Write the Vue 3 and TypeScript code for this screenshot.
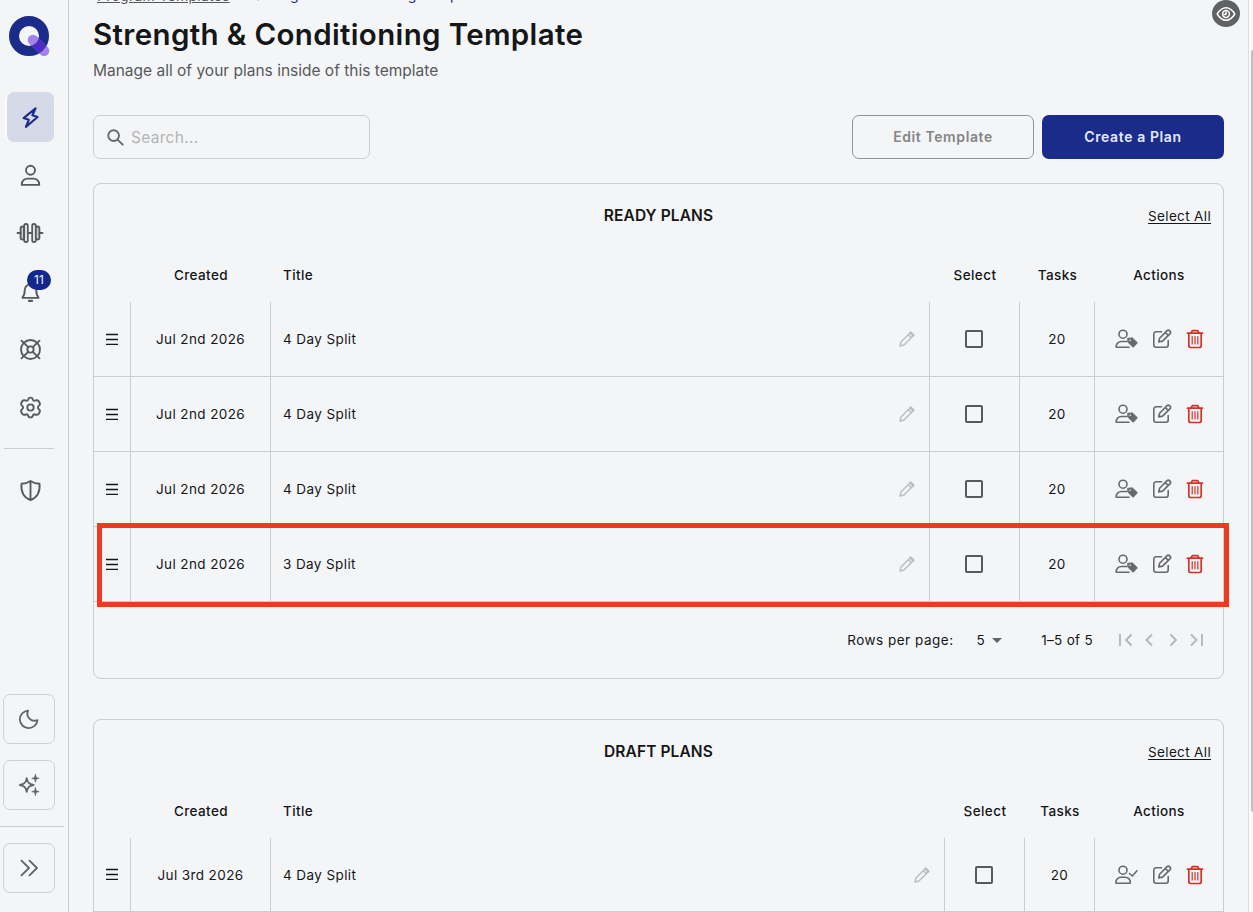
<script setup lang="ts">
interface Plan {
  id: number
  created: string
  title: string
  tasks: number
}
interface Panel {
  key: string
  heading: string
  assign: 'tag' | 'check'
  plans: Plan[]
  footer: boolean
}

const panels: Panel[] = [
  {
    key: 'ready',
    heading: 'READY PLANS',
    assign: 'tag',
    footer: true,
    plans: [
      { id: 1, created: 'Jul 2nd 2026', title: '4 Day Split', tasks: 20 },
      { id: 2, created: 'Jul 2nd 2026', title: '4 Day Split', tasks: 20 },
      { id: 3, created: 'Jul 2nd 2026', title: '4 Day Split', tasks: 20 },
      { id: 4, created: 'Jul 2nd 2026', title: '3 Day Split', tasks: 20 },
    ],
  },
  {
    key: 'draft',
    heading: 'DRAFT PLANS',
    assign: 'check',
    footer: false,
    plans: [{ id: 5, created: 'Jul 3rd 2026', title: '4 Day Split', tasks: 20 }],
  },
]
const highlighted = 4
</script>

<template>
  <div class="app">
    <aside class="sidebar">
      <svg class="logo" viewBox="0 0 42 42">
        <defs>
          <clipPath id="ring"><path clip-rule="evenodd" d="M20 0A20 20 0 0 1 20 40A20 20 0 0 1 20 0ZM20 10A10 10 0 0 0 20 30A10 10 0 0 0 20 10Z" /></clipPath>
        </defs>
        <circle cx="20" cy="20" r="15" fill="none" stroke="#1a2b8a" stroke-width="10" />
        <path d="M24 24L35 34.700" stroke="#a183ea" stroke-width="10.600" />
        <path d="M24 24L35 34.700" stroke="#4a2cc0" stroke-width="10.600" clip-path="url(#ring)" />
      </svg>

      <nav class="nav">
        <a class="nav-item active">
          <svg viewBox="0 0 24 24"><path d="M17.300 2.500L4.800 12.600L10.200 14.400L7.200 21.800L19.400 11.500L14 9.700Z" /></svg>
        </a>
        <a class="nav-item">
          <svg viewBox="0 0 24 24"><circle cx="12" cy="6.500" r="4.700" /><path d="M2.900 21.800V21A6 6 0 0 1 8.900 15.200H15.100A6 6 0 0 1 21.100 21V21.800Z" /></svg>
        </a>
        <a class="nav-item">
          <svg class="wide" viewBox="0 0 28 24">
            <rect class="shade" x="4.600" y="5.500" width="3.600" height="13" rx="1.800" /><rect x="8.200" y="3" width="3.600" height="18" rx="1.800" />
            <rect x="16.200" y="3" width="3.600" height="18" rx="1.800" /><rect class="shade" x="19.800" y="5.500" width="3.600" height="13" rx="1.800" />
            <path d="M11.800 12H16.200M1.500 12H4.600M23.400 12H26.500" />
          </svg>
        </a>
        <a class="nav-item">
          <svg viewBox="0 0 24 24"><path d="M3.500 18.600C5.500 16.500 6 14 6 10.500A6 6 0 0 1 18 10.500C18 14 18.500 16.500 20.500 18.600Z" /><path d="M10.400 21.800H13.600" stroke-width="2.200" /></svg>
          <span class="badge">11</span>
        </a>
        <a class="nav-item">
          <svg viewBox="0 0 24 24"><circle cx="12" cy="12" r="9.900" /><circle cx="12" cy="12" r="3.300" /><path d="M2.600 2.800L9.600 9.600M21.400 2.800L14.400 9.600M2.600 21.200L9.600 14.400M21.400 21.200L14.400 14.400" /></svg>
        </a>
        <a class="nav-item">
          <svg viewBox="0 0 24 24">
            <path d="M9.500 3.900Q9.800 1.700 12 1.700T14.500 3.900Q14.900 5 16.200 4.900Q19.200 3.700 20.500 5.300Q22.700 8.300 21.300 9.600Q19.700 10.800 19.700 12T21.300 14.400Q22.700 15.700 20.500 18.700Q19.200 20.300 16.200 19.100Q14.900 19 14.500 20.100Q14.200 22.300 12 22.300T9.500 20.100Q9.100 19 7.800 19.100Q4.800 20.300 3.500 18.700Q1.300 15.700 2.700 14.400Q4.300 13.200 4.300 12T2.700 9.600Q1.300 8.300 3.500 5.300Q4.800 3.700 7.800 4.900Q9.100 5 9.500 3.900Z" />
            <circle cx="12" cy="12" r="3.300" />
          </svg>
        </a>
      </nav>
      <div class="divider"></div>
      <a class="nav-item shield">
        <svg viewBox="0 0 24 24"><path d="M12 2C9 4 6 4.800 2.600 5C1.900 12.500 4.500 19 12 22C19.500 19 22.100 12.500 21.400 5C18 4.800 15 4 12 2ZM12 2V22" /></svg>
      </a>

      <div class="tools">
        <button class="tool"><svg viewBox="0 0 24 24"><path d="M11 2.800A9.600 9.600 0 1 0 21.200 13.200A7.800 7.800 0 0 1 11 2.800Z" /></svg></button>
        <button class="tool">
          <svg viewBox="0 0 24 24">
            <path d="M9.500 4.500C10.300 9.300 12 11 17 12C12 13 10.300 14.700 9.500 19.500C8.700 14.700 7 13 2 12C7 11 8.700 9.300 9.500 4.500Z" />
            <path class="solid" d="M19 .500C19.500 3.500 20 4.200 23 4.700C20 5.200 19.500 6 19 9C18.500 6 18 5.200 15 4.700C18 4.200 18.500 3.500 19 .500ZM19 15C19.500 18 20 18.700 23 19.200C20 19.700 19.500 20.500 19 23.500C18.500 20.500 18 19.700 15 19.200C18 18.700 18.500 18 19 15Z" />
          </svg>
        </button>
      </div>
      <div class="divider full"></div>
      <button class="tool"><svg viewBox="0 0 24 24"><path d="M3.800 4L12 12L3.800 20M12.500 4L20.700 12L12.500 20" /></svg></button>
    </aside>

    <main class="main">
      <div class="crumbs"><a>Program Templates</a><span class="current">Strength &amp; Conditioning Template</span></div>
      <h1>Strength &amp; Conditioning Template</h1>
      <p class="subtitle">Manage all of your plans inside of this template</p>

      <div class="toolbar">
        <label class="search">
          <svg viewBox="0 0 18 18"><circle cx="7" cy="7" r="5.700" /><path d="M11.200 11.200L16.600 16.600" /></svg>
          <span>Search...</span>
        </label>
        <div class="buttons">
          <button class="btn outline">Edit Template</button>
          <button class="btn primary">Create a Plan</button>
        </div>
      </div>

      <section v-for="panel in panels" :key="panel.key" class="panel" :class="panel.key">
        <header class="panel-head">
          <h2>{{ panel.heading }}</h2>
          <a class="select-all">Select All</a>
        </header>
        <div class="row head">
          <div></div><div>Created</div><div class="title">Title</div><div>Select</div><div>Tasks</div><div>Actions</div>
        </div>
        <div v-for="plan in panel.plans" :key="plan.id" class="row">
          <div class="cell"><svg class="grip" viewBox="0 0 12 12"><path d="M0 1.500H12M0 6.500H12M0 11.500H12" /></svg></div>
          <div class="cell"><span class="text">{{ plan.created }}</span></div>
          <div class="cell title">
            <span class="text">{{ plan.title }}</span>
            <svg class="pencil" viewBox="0 0 16 16"><path d="M1 15L2 11L11.200 1.800L14.200 4.800L5 14ZM9.300 3.700L12.300 6.700" /><path d="M11.700 1.700L14.300 4.300" stroke-width="2.600" /></svg>
          </div>
          <div class="cell"><span class="checkbox"></span></div>
          <div class="cell"><span class="text">{{ plan.tasks }}</span></div>
          <div class="cell actions">
            <svg class="assign" viewBox="0 0 23 20">
              <circle cx="8" cy="5.200" r="4" />
              <template v-if="panel.assign === 'tag'">
                <path d="M12 12.500H6.500A5.200 5.200 0 0 0 1.200 18.200H14" />
                <path class="tag" d="M13 9.300L17.400 8.900L22.400 13.800L18.200 18.300L13.300 13.600Z" />
                <circle class="hole" cx="15.200" cy="11.300" r=".8" />
              </template>
              <template v-else>
                <path d="M6.200 12.300H9.800A5 5 0 0 1 15.200 18.200H1A5 5 0 0 1 6.200 12.300ZM14.500 8.500L17.300 11L22 5.800" />
              </template>
            </svg>
            <svg class="edit" viewBox="0 0 20 20"><path d="M9.500 2.800H4A2.200 2.200 0 0 0 1.800 5V16A2.200 2.200 0 0 0 4 18.200H14A2.200 2.200 0 0 0 16.200 16V11.500M6.700 12.900L7.600 9.200L14.800 1.900A2.100 2.100 0 0 1 17.900 4.900L10.600 12.100ZM13.300 3.500L16.200 6.400" /></svg>
            <svg class="trash" viewBox="0 0 18 20"><path d="M1.500 4.200H16.500M5 4L6.300 1.700H11.700L13 4M2.800 4.400V16.500A2 2 0 0 0 4.800 18.500H13.200A2 2 0 0 0 15.200 16.500V4.400" /><path class="thin" d="M6.200 7.500V15M9 7.500V15M11.800 7.500V15" /></svg>
          </div>
          <div v-if="plan.id === highlighted" class="highlight"></div>
        </div>
        <footer v-if="panel.footer" class="pager">
          <span class="label">Rows per page:</span>
          <span class="size">5</span><i class="caret"></i>
          <span class="range">1–5 of 5</span>
          <svg viewBox="0 0 86 14"><path d="M2 1V13M13.500 1.500L8 7L13.500 12.500M34 1.500L28.500 7L34 12.500M52.500 1.500L58 7L52.500 12.500M73 1.500L78.500 7L73 12.500M84 1V13" /></svg>
        </footer>
      </section>
    </main>

    <div class="eye"><svg viewBox="0 0 20 16"><path d="M1.200 8Q5 1.800 10 1.800T18.800 8Q15 14.200 10 14.200T1.200 8Z" /><circle cx="10" cy="8" r="3.400" /><path d="M10 6V8.500H8" /></svg></div>
    <div class="scroll"><div class="thumb"></div></div>
  </div>
</template>

<style>
body { background: #f4f5f7; overflow: hidden; }
</style>

<style scoped>
* { box-sizing: border-box; }
.app { position: relative; display: flex; width: 1253px; height: 912px; overflow: hidden; background: #f4f5f7; color: #141617; font-family: Inter, "Liberation Sans", sans-serif; font-size: 13.5px; font-optical-sizing: none; }
svg { display: block; fill: none; stroke: currentColor; stroke-linecap: round; stroke-linejoin: round; flex: none; }
button { font: inherit; padding: 0; background: none; }
h1, h2, p { margin: 0; }

.sidebar { width: 69px; height: 912px; flex: none; border-right: 1px solid #cbccce; display: flex; flex-direction: column; padding-top: 16px; color: #58595b; }
.logo { width: 42px; height: 42px; margin-left: 9px; }
.nav { display: flex; flex-direction: column; gap: 8px; margin-top: 34px; }
.nav-item { position: relative; width: 47px; height: 50px; margin-left: 7px; border-radius: 7px; display: flex; align-items: center; justify-content: center; padding: 0 1px 0 0; }
.nav-item svg { width: 23px; height: 23px; stroke-width: 1.95; }
.nav-item svg.wide { width: 28px; height: 24px; stroke-width: 1.8; }
.shade { fill: #c9cacc; }
.nav-item.active { background: #d5d9e8; color: #1a2b8a; box-shadow: -2px 0 0 #fcfcfd; }
.nav-item.active svg { stroke-width: 2.2; }
.badge { position: absolute; left: 20px; top: 4px; width: 24px; height: 20px; border-radius: 10px; background: #14278c; color: #eef2ff; font-size: 12px; line-height: 20px; text-align: center; }
.divider { height: 1px; width: 50px; margin: 16px 0 0 4px; background: #cbccce; flex: none; }
.shield { margin-top: 16px; }
.tools { margin-top: auto; display: flex; flex-direction: column; gap: 16px; }
.tool { width: 52px; height: 50px; margin-left: 3px; border: 1px solid #d0d1d3; border-radius: 7px; color: #646567; display: flex; align-items: center; justify-content: center; flex: none; }
.tool svg { width: 22px; height: 22px; stroke-width: 2; }
.solid { fill: currentColor; stroke-width: .8; }
.divider.full { width: 64px; margin: 16px 0; }
.divider.full + .tool { margin-bottom: 19px; }

.main { width: 1131px; margin-left: 24px; flex: none; }
.crumbs { display: flex; gap: 24px; height: 18px; margin: -13px 0 0 4px; font-size: 14px; line-height: 18px; letter-spacing: .25px; color: #58595b; }
.crumbs a { text-decoration: underline; }
.current { color: #1a2b8a; margin-top: -1px; }
h1 { margin-top: 9px; height: 40px; line-height: 40px; font-size: 29.5px; font-weight: 600; letter-spacing: .35px; white-space: nowrap; }
.subtitle { height: 24px; margin-top: 5px; line-height: 24px; font-size: 15.5px; color: #58595b; }
.toolbar { display: flex; justify-content: space-between; margin-top: 32px; height: 44px; }
.search { width: 277px; border: 1px solid #cbccce; border-radius: 7px; display: flex; align-items: center; padding-left: 13px; gap: 7px; font-size: 15.5px; color: #b3b4b6; letter-spacing: .3px; }
.search svg { width: 17px; height: 17px; stroke: #68696b; stroke-width: 2; }
.buttons { display: flex; gap: 8px; }
.btn { width: 182px; height: 44px; padding-bottom: 2px; border-radius: 7px; font-size: 14px; font-weight: 600; letter-spacing: .6px; }
.outline { border: 1px solid #929395; color: #858688; }
.primary { border: 0; background: #1a2b8a; color: #e2eaff; }

.panel { border: 1px solid #cbccce; border-radius: 8px; margin-top: 24px; height: 496px; --cols: 37px 140px 659px 90px 75px 128px; }
.panel.draft { margin-top: 40px; --cols: 37px 140px 674px 80px 70px 128px; }
.panel-head { height: 64px; display: grid; grid-template-columns: 1fr auto 1fr; align-items: center; padding: 0 12px 2px; }
.panel-head h2 { grid-column: 2; font-size: 15.5px; font-weight: 600; letter-spacing: .1px; }
.select-all { justify-self: end; margin-top: 2px; text-decoration: underline; text-underline-offset: 2px; letter-spacing: .35px; }
.row { position: relative; display: grid; grid-template-columns: var(--cols); height: 75px; letter-spacing: .4px; }
.draft .row:last-child { height: 74px; }
.row > div:not(.highlight) { display: flex; align-items: center; justify-content: center; }
.row.head { height: 54px; font-weight: 500; }
.row > div.title { justify-content: space-between; padding: 0 14px 0 12px; }
.cell { border-right: 1px solid #cbccce; border-bottom: 1px solid #cbccce; }
.cell.actions { border-right: 0; gap: 14px; padding-left: 1px; color: #68696b; }
.grip { width: 12px; height: 12px; margin-top: -1px; stroke-width: 1.3; stroke-linecap: butt; }
.pencil { width: 16px; height: 16px; color: #bbbcbe; stroke-width: 1.4; }
.checkbox { width: 18px; height: 18px; margin-right: 1px; border: 2px solid #58595b; border-radius: 2px; }
.assign { width: 23px; height: 20px; stroke-width: 1.6; }
.tag { fill: currentColor; stroke-width: 1; }
.hole { fill: #f4f5f7; stroke: none; }
.edit { width: 20px; height: 20px; stroke-width: 1.6; }
.trash { width: 18px; height: 20px; color: #d03428; stroke-width: 1.7; }
.thin { stroke-width: 1.2; }
.highlight { position: absolute; left: 3px; top: -4px; width: 1132px; height: 84px; border: 5px solid #ed3b20; box-shadow: inset 0 -1px 0 #cbccce; }
.pager { display: flex; align-items: center; justify-content: flex-end; height: 76px; padding: 0 19px 0 0; letter-spacing: .5px; }
.pager .size { margin-left: 23px; margin-top: -1px; }
.caret { margin: 1px 0 0 7px; border: 5px solid transparent; border-top-color: #626365; border-bottom: 0; }
.pager .range { margin-left: 39px; letter-spacing: .3px; }
.pager svg { width: 86px; height: 14px; margin-left: 25px; stroke: #b3b4b6; stroke-width: 1.8; stroke-linecap: butt; stroke-linejoin: miter; }

.eye { position: absolute; left: 1212px; top: 0; width: 28px; height: 27px; border-radius: 50%; background: #606163; color: #fff; display: flex; align-items: center; justify-content: center; }
.eye svg { width: 20px; height: 16px; stroke-width: 1.5; }
.scroll { position: absolute; right: 0; top: 0; width: 5px; height: 912px; border-left: 1px solid #dedfe0; background: #fafafa; }
.thumb { margin: 50px 0 0 2px; height: 762px; background: #bebfc0; border-radius: 2px 0 0 2px; }
</style>
